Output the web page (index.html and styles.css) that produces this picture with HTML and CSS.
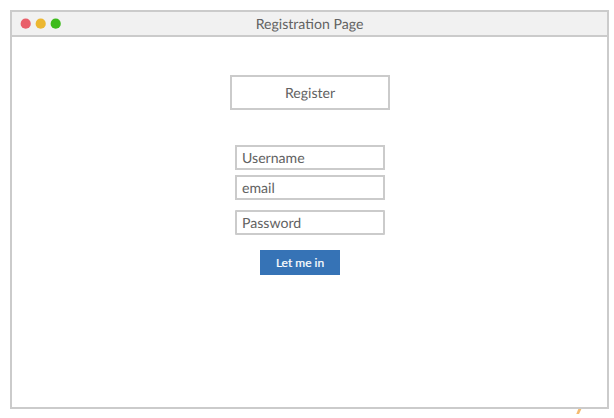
FILE: index.html
```html
<!DOCTYPE html>
<html lang="en">
<head>
<meta charset="utf-8">
<title>Registration Page</title>
<link rel="stylesheet" href="styles.css">
</head>
<body>
<main class="window">
  <header class="titlebar">
    <svg class="controls" width="42" height="12" viewBox="0 0 42 12">
      <circle cx="5.7" cy="5.7" r="5.1" fill="#e95f6a"/>
      <circle cx="20.7" cy="5.7" r="5.1" fill="#ecb731"/>
      <circle cx="35.7" cy="5.7" r="5.1" fill="#3dbb1c"/>
    </svg>
    <span class="title">Registration Page</span>
  </header>
  <form class="form">
    <h1 class="heading">Register</h1>
    <div class="field">Username</div>
    <div class="field">email</div>
    <div class="field password">Password</div>
    <button class="submit" type="button">Let me in</button>
  </form>
</main>
<svg class="mark" width="6" height="6" viewBox="0 0 6 6"><path d="M2.3 0H5.4L3 5H.3Z" fill="#f4bc71"/></svg>
</body>
</html>
```
FILE: styles.css
```css
* {
  box-sizing: border-box;
}

body {
  margin: 0;
  padding: 10px;
  height: 418px;
  overflow: hidden;
  background: #fff;
  color: #626262;
  font: 14.1px/20px Lato, sans-serif;
  text-rendering: geometricPrecision;
}

.window {
  width: 599px;
  height: 399px;
  border: 2px solid #cbcbcb;
}

.titlebar {
  display: grid;
  grid-template-columns: 50px 1fr 50px;
  grid-template-rows: 23px;
  align-items: center;
  height: 25px;
  border-bottom: 2px solid #cbcbcb;
  background: #f1f1f1;
}

.controls {
  margin-left: 8px;
}

.title {
  text-align: center;
  line-height: 22px;
  padding-top: 3px;
}

.form {
  display: flex;
  flex-direction: column;
  align-items: center;
  width: 596px;
  padding-top: 38px;
}

.heading {
  width: 160px;
  height: 35px;
  margin: 0 0 35px;
  border: 2px solid #cbcbcb;
  font-size: 14.1px;
  font-weight: 400;
  line-height: 33px;
  text-align: center;
}

.field {
  width: 150px;
  height: 25px;
  margin-bottom: 5px;
  padding-left: 5px;
  border: 2px solid #cbcbcb;
  line-height: 23px;
}

.password {
  margin: 5px 0 15px;
  border-radius: 1px;
}

.submit {
  width: 80px;
  height: 25px;
  margin-right: 20px;
  padding: 0;
  border: 0;
  background: #3673b6;
  color: #fff;
  font: 12px/25px Lato, sans-serif;
  -webkit-text-stroke: 0.2px #fff;
}

.mark {
  display: block;
  margin-left: 566px;
}
```
